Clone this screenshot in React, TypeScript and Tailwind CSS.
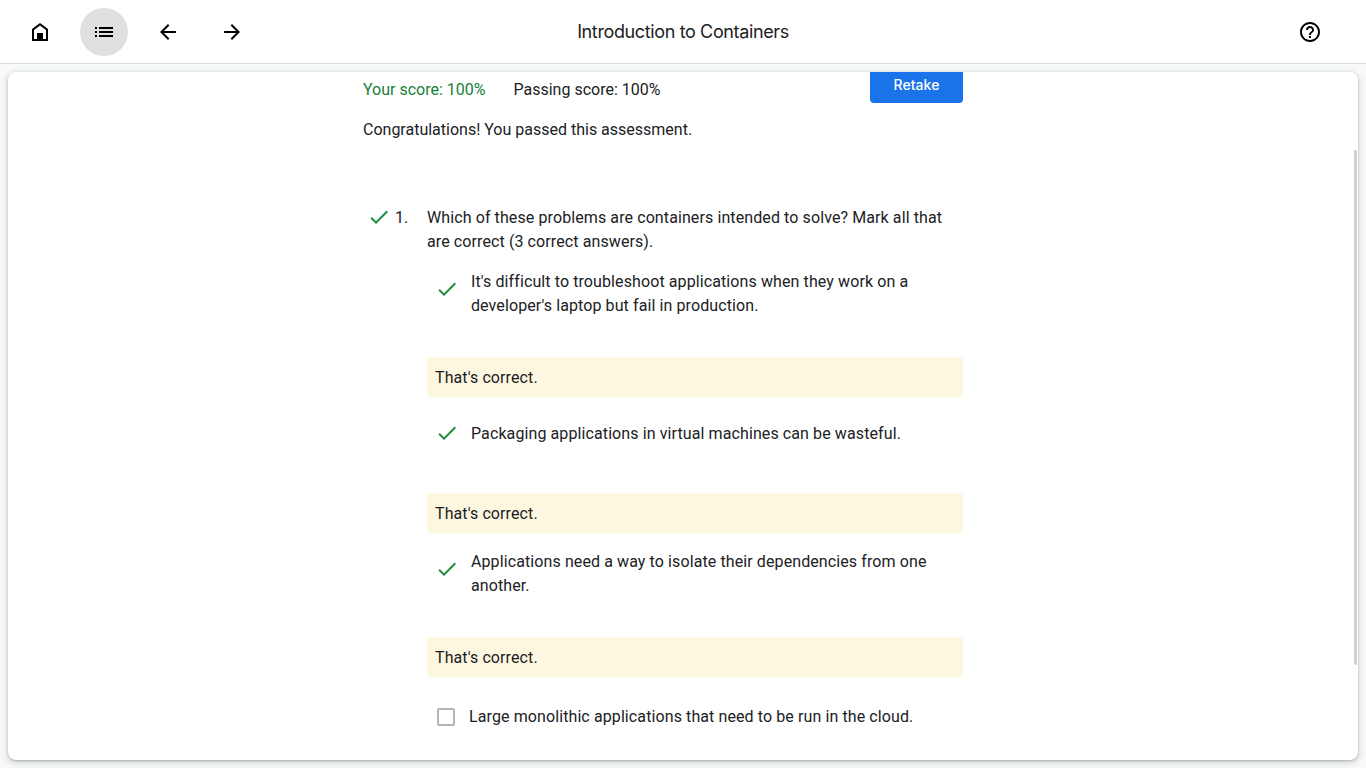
import type { ReactNode } from 'react';

function Icon({ d, className = '' }: { d: string; className?: string }) {
  return (
    <svg viewBox="0 0 24 24" className={`block size-6 shrink-0 ${className}`} fill="currentColor" aria-hidden="true">
      <path d={d} />
    </svg>
  );
}

const HOME = 'M12 3l8 6v12H4V9zM6 10v9h3v-6h6v6h3v-9l-6-4.5z';
const LIST = 'M3 13h2v-2H3v2zm0 4h2v-2H3v2zm0-8h2V7H3v2zm4 4h14v-2H7v2zm0 4h14v-2H7v2zM7 7v2h14V7H7z';
const BACK = 'M20 11H7.83l5.59-5.59L12 4l-8 8 8 8 1.41-1.41L7.83 13H20v-2z';
const FORWARD = 'M12 4l-1.41 1.41L16.17 11H4v2h12.17l-5.58 5.59L12 20l8-8z';
const HELP =
  'M11 18h2v-2h-2v2zm1-16C6.48 2 2 6.48 2 12s4.48 10 10 10 10-4.48 10-10S17.52 2 12 2zm0 18c-4.41 0-8-3.59-8-8s3.59-8 8-8 8 3.59 8 8-3.59 8-8 8zm0-14c-2.21 0-4 1.79-4 4h2c0-1.1.9-2 2-2s2 .9 2 2c0 2-3 1.75-3 5h2c0-2.25 3-2.5 3-5 0-2.21-1.79-4-4-4z';
const CHECK = 'M9 16.17L4.83 12l-1.42 1.41L9 19 21 7l-1.41-1.41z';

function IconButton({ label, d, active = false }: { label: string; d: string; active?: boolean }) {
  return (
    <button
      aria-label={label}
      className={`flex size-12 items-center justify-center rounded-full text-black ${active ? 'bg-[#e0e0e0]' : ''}`}
    >
      <Icon d={d} />
    </button>
  );
}

function Answer({ children, tall = false }: { children: ReactNode; tall?: boolean }) {
  return (
    <div className="flex items-start">
      <Icon d={CHECK} className={tall ? 'mt-[7px] ml-2 text-[#1e8e3e]' : '-mt-px ml-2 text-[#1e8e3e]'} />
      <p className="ml-3 whitespace-nowrap">{children}</p>
    </div>
  );
}

function Feedback() {
  return <div className="h-10 rounded-[4px] bg-[#fef7e0] px-2 pt-[9px]">That's correct.</div>;
}

export default function App() {
  return (
    <div className="flex h-[768px] w-full flex-col overflow-hidden bg-[#f8f9fa] font-['Roboto',sans-serif] text-[16px] leading-6 tracking-[0.1px] text-[#202124]">
      <header className="grid h-16 shrink-0 grid-cols-[1fr_auto_1fr] items-center border-b border-[#dadce0] bg-white">
        <div className="flex gap-4 pl-4">
          <IconButton label="Home" d={HOME} />
          <IconButton label="Outline" d={LIST} active />
          <IconButton label="Previous" d={BACK} />
          <IconButton label="Next" d={FORWARD} />
        </div>
        <h1 className="font-['Google_Sans','Inter',sans-serif] text-[18px] leading-6 font-normal tracking-[-0.37px]">
          Introduction to Containers
        </h1>
        <div className="flex justify-end pr-8">
          <IconButton label="Help" d={HELP} />
        </div>
      </header>

      <main className="mx-2 mt-2 mb-2 flex flex-1 justify-between overflow-hidden rounded-lg bg-white shadow-[0_1px_2px_0_rgba(60,64,67,0.3),0_2px_6px_2px_rgba(60,64,67,0.15)]">
        <div className="ml-[355px] w-[600px]">
          <div className="flex items-start justify-between tracking-normal">
            <div className="flex gap-7 pt-[6px]">
              <span className="text-[#188038]">Your score: 100%</span>
              <span>Passing score: 100%</span>
            </div>
            <button className="flex h-[31px] w-[93px] justify-center rounded-b-[4px] bg-[#1a73e8] pt-px font-['Google_Sans','Inter',sans-serif] text-[14px] leading-6 font-medium tracking-[0.05px] text-white">
              Retake
            </button>
          </div>
          <p className="mt-[15px] tracking-normal">Congratulations! You passed this assessment.</p>

          <section className="mt-16 flex">
            <Icon d={CHECK} className="-mt-px ml-1 text-[#1e8e3e]" />
            <span className="ml-1 w-8 shrink-0">1.</span>
            <div className="w-[536px]">
              <p className="whitespace-nowrap">
                Which of these problems are containers intended to solve? Mark all that
                <br />
                are correct (3 correct answers).
              </p>
              <div className="mt-4 mb-[39px]">
                <Answer tall>
                  It's difficult to troubleshoot applications when they work on a
                  <br />
                  developer's laptop but fail in production.
                </Answer>
              </div>
              <Feedback />
              <div className="mt-[25px] mb-[47px]">
                <Answer>Packaging applications in virtual machines can be wasteful.</Answer>
              </div>
              <Feedback />
              <div className="mt-[17px] mb-[39px]">
                <Answer tall>
                  Applications need a way to isolate their dependencies from one
                  <br />
                  another.
                </Answer>
              </div>
              <Feedback />
              <label className="mt-[28px] flex items-center">
                <span className="ml-[10px] size-[18px] rounded-[2px] border-2 border-[#b5b5b5]" />
                <span className="ml-[14px]">Large monolithic applications that need to be run in the cloud.</span>
              </label>
            </div>
          </section>
        </div>
        <div className="mt-[78px] mr-px h-[515px] w-[3px] rounded-sm bg-[#d0d0d0]" />
      </main>
    </div>
  );
}
